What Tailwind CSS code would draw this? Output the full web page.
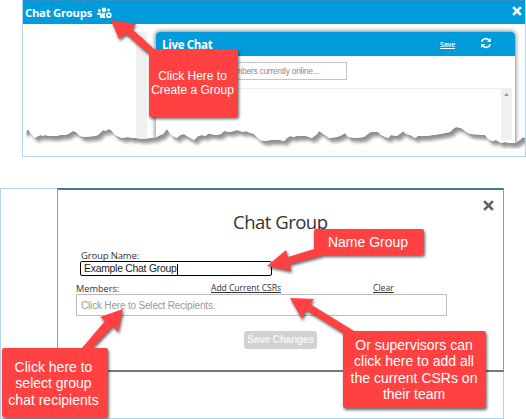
<!DOCTYPE html>
<html lang="en">
<head>
<meta charset="utf-8">
<title>Chat Groups</title>
<script src="https://cdn.jsdelivr.net/npm/@tailwindcss/browser@4"></script>
</head>
<body class="bg-white">
<main class="relative w-[526px] h-[419px] overflow-hidden bg-white font-['Open_Sans','Noto_Sans',sans-serif]">

  <!-- Chat groups window -->
  <section class="relative ml-[22px] w-[504px] h-[157px] overflow-hidden border-x border-b border-[#b3d3ee]">
    <header class="-mx-px h-6 bg-[#009bdb] border-t border-[#2a93cc] flex items-center px-[3px] text-white">
      <h1 class="w-[67px] whitespace-nowrap text-[11.3px] tracking-[-0.25px] leading-none font-bold mt-px">Chat Groups</h1>
      <svg class="ml-[5px] mt-px w-[15px] h-[12px]" viewBox="0 0 15 12" fill="#fff">
        <circle cx="2.3" cy="3.5" r="1.4"/><circle cx="7" cy="2.9" r="2.3"/><circle cx="11.6" cy="3" r="1.4"/>
        <path d="M0 8V7Q0 5.4 1.6 5.4H3.6L4.3 5.8Q3.2 6.6 3 8ZM3 11V8.7Q3.2 6 5.7 5.9H8.5Q7.4 7.5 7.8 9.5L8.6 11Z"/>
        <circle cx="11.8" cy="8.2" r="2" fill="none" stroke="#fff" stroke-width="1.7"/>
      </svg>
      <svg class="ml-auto mr-px -mt-[3px] w-[10px] h-[10px]" viewBox="0 0 10 10"><path d="M2 2L8 8M8 2L2 8" stroke="#fff" stroke-width="2.5" stroke-linecap="square"/></svg>
    </header>
    <div class="flex pt-2 h-[140px]">
      <aside class="w-[124px] flex justify-end">
        <div class="w-[11px] bg-[#f0f0f0] flex justify-center pt-[5px]"><svg class="w-[5px] h-[3px]" viewBox="0 0 5 3"><path d="M0 3L2.5 0L5 3Z" fill="#999"/></svg></div>
      </aside>
      <div class="ml-[9px] w-[359px] rounded-t-[4px] bg-white shadow-[0_0_4px_1px_#888]">
        <div class="h-6 rounded-t-[4px] bg-[#009bdb] flex items-center text-white">
          <h2 class="ml-[6px] w-[55px] whitespace-nowrap text-[11.5px] tracking-[-0.3px] leading-none font-bold mt-px">Live Chat</h2>
          <a class="ml-[223px] w-[15px] whitespace-nowrap text-[7px] tracking-[-0.15px] leading-[10px] underline font-semibold mt-[2px]">Save</a>
          <svg class="ml-[25px] -mt-[2px] w-[12px] h-[12px]" viewBox="0 0 12 12"><path d="M1.7 4.9A4.2 4.2 0 0 1 9 3.1M10.3 7.1A4.2 4.2 0 0 1 3 8.9" fill="none" stroke="#fff" stroke-width="1.7"/><path d="M10.9 1V5H6.9ZM1.1 11V7H5.1Z" fill="#fff"/></svg>
        </div>
        <div class="mt-[6px] ml-[7px] w-[184px] h-[18px] border border-[#c4c4c4] flex items-center pl-[60px] whitespace-nowrap font-['Liberation_Sans',sans-serif] text-[8.4px] text-[#8c8c8c] tracking-[-0.22px]">members currently online...</div>
        <div class="mt-2 mr-[3px] ml-[7px] h-[52px] border-t border-[#eeeeee] flex justify-end">
          <div class="w-[11px] bg-[#f0f0f0] flex justify-center pt-[4px]"><svg class="w-[5px] h-[3px]" viewBox="0 0 5 3"><path d="M0 3L2.5 0L5 3Z" fill="#999"/></svg></div>
        </div>
      </div>
    </div>
    <!-- torn lower edge -->
    <svg class="absolute left-[-1px] top-0 w-[504px] h-[156px]" viewBox="22 0 504 156">
      <defs>
        <path id="tear" d="M10 160V131L27 131L28 129L31 134L35 138L38 136L41 135L43 136L45 135L49 136L57 136L60 135L66 135L70 133L71 132L73 131L76 132L80 136L84 137L95 136L98 135L103 130L106 131L108 129L111 130L115 135L122 138L128 137L132 138L136 138L142 139L150 138L157 137L158 136L163 134L167 129L171 135L177 138L180 135L184 134L187 136L194 140L198 136L202 135L205 136L208 134L211 134L216 135L221 134L224 131L230 132L237 130L240 131L243 132L246 131L248 132L254 134L260 140L265 141L271 140L280 140L284 141L287 138L290 136L294 137L296 136L306 136L312 138L317 134L319 131L322 133L329 138L337 137L342 135L345 133L348 137L356 138L364 137L369 133L371 132L378 132L381 135L388 138L391 135L397 136L401 133L403 131L406 134L410 135L415 138L418 136L426 136L440 134L450 132L453 129L456 127L461 128L465 131L470 134L485 135L488 139L492 141L496 140L501 143L505 142L510 143L515 143L520 140L523 137L526 139L540 142V160Z"/>
        <filter id="soft" x="-5%" y="-20%" width="110%" height="140%"><feGaussianBlur stdDeviation="1.5"/></filter>
        <clipPath id="tearclip"><use href="#tear"/></clipPath>
      </defs>
      <use href="#tear" fill="#fff"/>
      <g clip-path="url(#tearclip)">
        <use href="#tear" fill="#8c8c8c"/>
        <use href="#tear" fill="#fff" filter="url(#soft)" transform="translate(3.5 5)"/>
        <use href="#tear" fill="#fff" opacity=".25" transform="translate(1.5 2.5)" filter="url(#soft)"/>
        <path d="M10 149H530V165H10ZM22 127h4.500v24h-4.500z" fill="#fff"/>
      </g>
    </svg>
  </section>

  <!-- Chat group dialog -->
  <section class="relative mt-[31px] w-[504px] h-[231px] border border-[#b3d3ee]">
    <div class="relative -mt-px ml-[56px] -mr-px w-[447px] h-[184px] bg-white border-t-2 border-t-[#47779e] border-l border-l-[#999] border-r border-r-[#7f9fbc] border-b-2 border-b-[#777]">
      <svg class="absolute right-[9px] top-[10px] w-[11px] h-[11px]" viewBox="0 0 11 11"><path d="M2 2L9 9M9 2L2 9" stroke="#616161" stroke-width="2.5" stroke-linecap="square"/></svg>
      <h2 class="pt-[20px] h-[60px] ml-[175px] w-[100px] whitespace-nowrap text-[18.5px] leading-[24px] tracking-[-0.5px] text-[#333]">Chat Group</h2>
      <div class="ml-[23px]">
        <label class="block h-[11px] whitespace-nowrap text-[9.5px] tracking-[-0.15px] leading-[11px] text-[#333]">Group Name:</label>
        <div class="-ml-px w-[192px] h-[15px] border-[1.5px] border-black rounded-[2px] flex items-center pt-px pl-[3px] whitespace-nowrap font-['Liberation_Sans',sans-serif] text-[10.4px] tracking-[-0.25px] leading-none text-[#222]">Example Chat Group<span class="w-px h-[11px] bg-black"></span></div>
      </div>
      <div class="ml-[18px] mt-[7px] flex h-[11px] whitespace-nowrap leading-[11px] text-[#333]">
        <span class="w-[135px] text-[9.2px]">Members:</span>
        <a class="w-[162px] text-[8.6px] tracking-[-0.05px] underline">Add Current CSRs</a>
        <a class="text-[8.6px] underline">Clear</a>
      </div>
      <div class="ml-[18px] w-[371px] h-[22px] border border-[#bdbdbd] flex items-center pl-1 whitespace-nowrap font-['Liberation_Sans',sans-serif] text-[10px] tracking-[-0.18px] text-[#999]">Click Here to Select Recipients.</div>
      <button class="block ml-[186px] mt-[15px] w-[73px] h-[18px] rounded-[3px] bg-[#d1d1d1] font-['Liberation_Sans',sans-serif] font-bold text-[10.2px] tracking-[-0.25px] leading-[18px] whitespace-nowrap text-[#f5f5f5]">Save Changes</button>
    </div>
  </section>

  <!-- Callout arrows and bodies -->
  <svg class="absolute inset-0 w-[526px] h-[419px]" viewBox="0 0 526 419">
    <g fill="#ff4142" class="drop-shadow-[1px_2px_1.5px_rgba(0,0,0,0.6)]">
      <path d="M111 20L136 24L132 29L154 49H236Q238 49 238 51V115Q238 117 236 117H151Q149 117 149 115V54L126 34L119 39Z"/>
      <path d="M267 266L286 250L288 257L314 249V231Q314 229 316 229H422Q424 229 424 231V253Q424 255 422 255H324L290 264L291 271Z"/>
      <path d="M123 309L100 317L105 321L82 348H4Q2 348 2 350V415Q2 417 4 417H106Q108 417 108 415V350Q108 348 106 348H92L113 326L118 332Z"/>
      <path d="M290 298L314 299L310 304L354 331H484Q486 331 486 333V406Q486 408 484 408H345Q343 408 343 406V333L306 310L302 319Z"/>
    </g>
  </svg>
  <p class="absolute left-[148px] top-[69px] w-[89px] text-center whitespace-nowrap font-['Liberation_Sans',sans-serif] text-[12px] leading-[14px] text-white">Click Here to<br>Create a Group</p>
  <p class="absolute left-[313px] top-[234px] w-[110px] text-center whitespace-nowrap font-['Liberation_Sans',sans-serif] text-[14px] leading-[16px] text-white">Name Group</p>
  <p class="absolute left-0 top-[359px] w-[107px] text-center whitespace-nowrap font-['Liberation_Sans',sans-serif] text-[14px] leading-[16.3px] text-white">Click here to<br>select group<br>chat recipients</p>
  <p class="absolute left-[343px] top-[337px] w-[142px] text-center whitespace-nowrap font-['Liberation_Sans',sans-serif] text-[14px] leading-[16.4px] text-white">Or supervisors can<br>click here to add all<br>the current CSRs on<br>their team</p>
</main>
</body>
</html>
